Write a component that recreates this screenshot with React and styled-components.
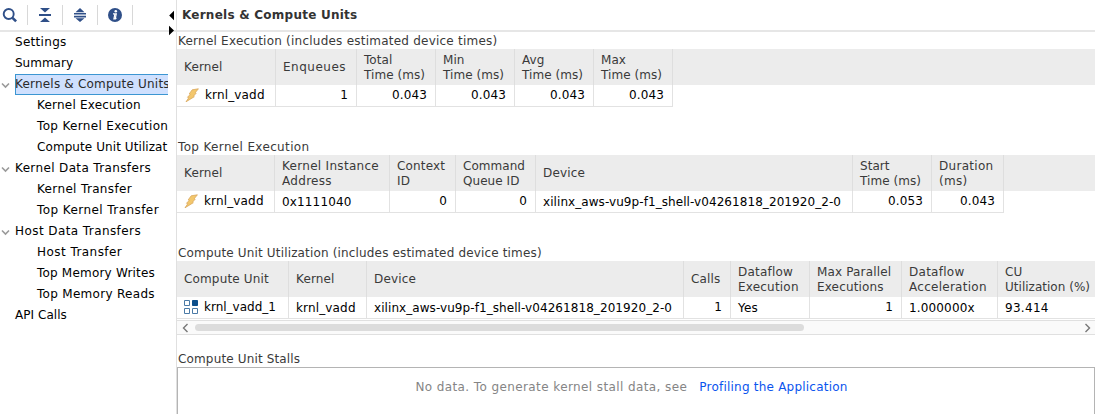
import React from "react";
import styled, { createGlobalStyle } from "styled-components";

const Global = createGlobalStyle`
  * { box-sizing: border-box; }
  body {
    margin: 0;
    background: #fff;
    overflow: hidden;
    font: 12px/15px "DejaVu Sans", sans-serif;
    color: #000;
  }
`;

const Window = styled.div`
  display: grid;
  grid-template-columns: 176px 1fr;
  height: 414px;
  overflow: hidden;
`;

const Sidebar = styled.aside`
  position: relative;
  display: flex;
  flex-direction: column;
  min-width: 0;
`;

const Toolbar = styled.div`
  display: flex;
  height: 32px;
  border-bottom: 2px solid #e6e6e6;
`;

const Tool = styled.div`
  display: flex;
  align-items: center;
  justify-content: center;
  width: ${(p) => p.$w}px;
  height: 20px;
  margin-top: 5px;
  padding-right: ${(p) => p.$pad || 0}px;
  border-right: 1px solid #d8d8d8;
`;

const SashArrows = styled.svg`
  position: absolute;
  left: 168px;
  top: 10px;
`;

const Tree = styled.div`
  width: 168px;
  overflow: hidden;
`;

const TreeRow = styled.div`
  display: grid;
  grid-template-columns: 15px max-content;
  align-items: stretch;
  height: 21px;
`;

const Twisty = styled.svg`
  margin: 8px 0 0 1px;
`;

const TreeLabel = styled.span`
  min-width: 160px;
  padding-left: ${(p) => (p.$child ? 22 : 0)}px;
  line-height: 21px;
  white-space: nowrap;
  letter-spacing: ${(p) => p.$ls}px;
  ${(p) =>
    p.$selected &&
    `background: #cfe0fe; color: #2a2a2a; box-shadow: inset 0 0 0 1px #3c96d2;`}
`;

const Main = styled.main`
  display: flex;
  flex-direction: column;
  min-width: 0;
  border-left: 1px solid #e0e0e0;
  color: #3a3a3a;
`;

const Title = styled.h1`
  margin: 0;
  height: 32px;
  padding-left: 5px;
  border-bottom: 2px solid #e6e6e6;
  font-size: 12px;
  line-height: 31px;
  color: #333;
  letter-spacing: 0.24px;
`;

const Section = styled.section`
  height: ${(p) => p.$h}px;
`;

const Caption = styled.h2`
  margin: 0;
  height: ${(p) => p.$h}px;
  padding: ${(p) => p.$h - 15}px 0 0 1px;
  font-size: 12px;
  font-weight: normal;
  line-height: 15px;
  white-space: nowrap;
  letter-spacing: ${(p) => p.$ls ?? 0.15}px;
`;

const HeadRow = styled.div`
  display: grid;
  grid-template-columns: ${(p) => p.$cols};
  height: 36px;
  background: #ececec;
`;

const HeadCell = styled.div`
  display: flex;
  align-items: center;
  padding: 1px 0 0 7px;
  border-right: 1px solid #dedede;
  white-space: pre;
  letter-spacing: ${(p) => p.$ls ?? 0.15}px;
`;

const BodyRow = styled.div`
  display: grid;
  grid-template-columns: ${(p) => p.$cols};
  width: max-content;
  height: 22px;
  border-bottom: 1px solid #e2e2e2;
  color: #000;
`;

const BodyCell = styled.div`
  display: flex;
  justify-content: ${(p) => (p.$right ? "flex-end" : "flex-start")};
  padding: ${(p) => (p.$raised ? 3 : 4)}px 8px 0 7px;
  border-right: 1px solid #e2e2e2;
  white-space: nowrap;
  letter-spacing: ${(p) => p.$ls ?? 0.15}px;
`;

const CellIcon = styled.span`
  display: flex;
  width: ${(p) => p.$w}px;
  flex: none;
  padding-left: ${(p) => p.$x || 0}px;
`;

const Scrollbar = styled.div`
  display: flex;
  align-items: center;
  justify-content: space-between;
  height: 15px;
  margin-top: 1px;
  padding: 0 4px 0 5px;
  background: #fafafa;
  border-top: 1px solid #e0e0e0;
  border-bottom: 1px solid #e0e0e0;
`;

const Thumb = styled.div`
  width: 609px;
  height: 7px;
  margin: 0 auto 0 6px;
  border-radius: 3.5px;
  background: #dcdcdc;
`;

const Empty = styled.div`
  display: flex;
  justify-content: center;
  height: 60px;
  padding: 12px 9px 0 0;
  border: 1px solid #b4b4b4;
  color: #858585;
  letter-spacing: 0.4px;
`;

const Link = styled.a`
  margin-left: 12px;
  color: #0a54ee;
  letter-spacing: 0.22px;
`;

const Chevron = () => (
  <Twisty width="9" height="7" viewBox="0 0 9 7" fill="none">
    <path d="M1 1.5l3.5 3.5L8 1.5" stroke="#9a9a9a" strokeWidth="1.6" />
  </Twisty>
);

const Bolt = () => (
  <svg width="14" height="15" viewBox="0 0 14 15">
    <path
      d="M7.2 1.8L13.4.8 10.3 4.6l.9.5-2.6 3 .7.6L1 13.8l2.8-4.1-1.3-.4 2.7-2.9-1-.5z"
      fill="#f3c76c"
      stroke="#d9a75c"
      strokeWidth=".8"
    />
  </svg>
);

const Blocks = () => (
  <svg width="14" height="14" viewBox="0 0 14 14" fill="none" stroke="#4a7aa6">
    <path d="M.5.5h5v5h-5zM.5 8.5h5v5h-5zM8.5 8.5h5v5h-5z" />
    <path d="M8.5.5h5v5h-5z" fill="#0d4f8b" stroke="#0d4f8b" />
  </svg>
);

const BLUE = "#2f4f88";

const SearchIcon = () => (
  <svg width="16" height="16" viewBox="0 0 16 16" fill="none" stroke={BLUE}>
    <circle cx="6.7" cy="7" r="5" strokeWidth="1.9" />
    <path d="M10.5 10.8l3.6 3.6" strokeWidth="2.6" />
  </svg>
);

const CollapseIcon = () => (
  <svg width="14" height="16" viewBox="0 0 14 16" fill={BLUE}>
    <path d="M2 1h10L7 5.5zM1 7h12v2H1zM2 15h10L7 10.5z" />
  </svg>
);

const ExpandIcon = () => (
  <svg width="14" height="16" viewBox="0 0 14 16" fill={BLUE}>
    <path d="M2.5 5.2L7 1l4.5 4.2zM1 6h12v1.6H1zM1 8.8h12v1.6H1zM2.5 11.2L7 15l4.5-3.8z" />
  </svg>
);

const InfoIcon = () => (
  <svg width="16" height="16" viewBox="0 0 16 16">
    <circle cx="8" cy="8" r="7" fill={BLUE} />
    <circle cx="8.8" cy="4.2" r="1.3" fill="#fff" />
    <path d="M6 6.8h3.3l-1 4.6h1.2M7.9 7l-1 4.8h2" stroke="#fff" strokeWidth="1.2" fill="none" />
  </svg>
);

const TREE = [
  { label: "Settings", ls: 0.3 },
  { label: "Summary", ls: 0 },
  { label: "Kernels & Compute Units", open: true, selected: true, ls: 0.2 },
  { label: "Kernel Execution", child: true, ls: 0.21 },
  { label: "Top Kernel Execution", child: true, ls: 0.34 },
  { label: "Compute Unit Utilizat", child: true, ls: 0.08 },
  { label: "Kernel Data Transfers", open: true, ls: 0.36 },
  { label: "Kernel Transfer", child: true, ls: 0.35 },
  { label: "Top Kernel Transfer", child: true, ls: 0.43 },
  { label: "Host Data Transfers", open: true, ls: 0.42 },
  { label: "Host Transfer", child: true, ls: 0.45 },
  { label: "Top Memory Writes", child: true, ls: 0.2 },
  { label: "Top Memory Reads", child: true, ls: 0.3 },
  { label: "API Calls", ls: 0.05 },
];

const DEVICE = "xilinx_aws-vu9p-f1_shell-v04261818_201920_2-0";

const EXECUTION = [
  { w: 99, head: "Kernel", value: "krnl_vadd", icon: "bolt", iconWidth: 21, iconX: 1 },
  { w: 81, head: "Enqueues", headLs: 0.5, value: "1", right: true },
  { w: 79, head: "Total\nTime (ms)", headLs: 0.05, value: "0.043", right: true },
  { w: 79, head: "Min\nTime (ms)", headLs: 0.05, value: "0.043", right: true },
  { w: 79, head: "Avg\nTime (ms)", headLs: 0.05, value: "0.043", right: true },
  { w: 79, head: "Max\nTime (ms)", headLs: 0.05, value: "0.043", right: true },
];

const TOP_EXECUTION = [
  { w: 98, head: "Kernel", value: "krnl_vadd", icon: "bolt", iconWidth: 20 },
  { w: 115, head: "Kernel Instance\nAddress", headLs: 0.3, value: "0x1111040" },
  { w: 66, head: "Context\nID", value: "0", right: true },
  { w: 80, head: "Command\nQueue ID", headLs: 0.05, value: "0", right: true },
  { w: 317, head: "Device", value: DEVICE, ls: 0.07 },
  { w: 79, head: "Start\nTime (ms)", headLs: 0.05, value: "0.053", right: true },
  { w: 72, head: "Duration\n(ms)", headLs: 0.3, value: "0.043", right: true },
];

const UTILIZATION = [
  { w: 112, head: "Compute Unit", value: "krnl_vadd_1", icon: "blocks", iconWidth: 20, ls: 0 },
  { w: 78, head: "Kernel", value: "krnl_vadd" },
  { w: 317, head: "Device", value: DEVICE, ls: 0.07 },
  { w: 47, head: "Calls", value: "1", right: true },
  { w: 79, head: "Dataflow\nExecution", headLs: 0.2, value: "Yes" },
  { w: 92, head: "Max Parallel\nExecutions", value: "1", right: true },
  { w: 96, head: "Dataflow\nAcceleration", headLs: 0.27, value: "1.000000x" },
  { w: 98, head: "CU\nUtilization (%)", headLs: 0.02, value: "93.414", ls: 0.3 },
];

const Table = ({ columns }) => {
  const cols = columns.map((c) => `${c.w}px`).join(" ");
  return (
    <>
      <HeadRow $cols={cols}>
        {columns.map((c, i) => (
          <HeadCell key={i} $ls={c.headLs}>{c.head}</HeadCell>
        ))}
      </HeadRow>
      <BodyRow $cols={cols}>
        {columns.map((c, i) => (
          <BodyCell key={i} $right={c.right} $raised={c.right || c.icon} $ls={c.ls}>
            {c.icon && (
              <CellIcon $w={c.iconWidth} $x={c.iconX}>
                {c.icon === "bolt" ? <Bolt /> : <Blocks />}
              </CellIcon>
            )}
            {c.value}
          </BodyCell>
        ))}
      </BodyRow>
    </>
  );
};

export default function App() {
  return (
    <Window>
      <Global />
      <Sidebar>
        <Toolbar>
          <Tool $w={28} $pad={7}><SearchIcon /></Tool>
          <Tool $w={35}><CollapseIcon /></Tool>
          <Tool $w={35}><ExpandIcon /></Tool>
          <Tool $w={35}><InfoIcon /></Tool>
        </Toolbar>
        <SashArrows width="8" height="26" viewBox="0 0 8 26">
          <path d="M6 .8v9.4L1.2 5.5zM1 15.8v9.4l5-4.7z" />
        </SashArrows>
        <Tree>
          {TREE.map((item) => (
            <TreeRow key={item.label}>
              <span>{item.open && <Chevron />}</span>
              <TreeLabel $child={item.child} $selected={item.selected} $ls={item.ls}>
                {item.label}
              </TreeLabel>
            </TreeRow>
          ))}
        </Tree>
      </Sidebar>
      <Main>
        <Title>Kernels &amp; Compute Units</Title>
        <Section $h={75}>
          <Caption $h={17} $ls={0.23}>Kernel Execution (includes estimated device times)</Caption>
          <Table columns={EXECUTION} />
        </Section>
        <Section $h={106}>
          <Caption $h={48} $ls={0.35}>Top Kernel Execution</Caption>
          <Table columns={TOP_EXECUTION} />
        </Section>
        <Section $h={122}>
          <Caption $h={48} $ls={0.16}>Compute Unit Utilization (includes estimated device times)</Caption>
          <Table columns={UTILIZATION} />
          <Scrollbar>
            <svg width="7" height="10" viewBox="0 0 7 10" fill="none" stroke="#777" strokeWidth="1.4">
              <path d="M5.5 1L1.5 5l4 4" />
            </svg>
            <Thumb />
            <svg width="7" height="10" viewBox="0 0 7 10" fill="none" stroke="#777" strokeWidth="1.4">
              <path d="M1.5 1l4 4-4 4" />
            </svg>
          </Scrollbar>
        </Section>
        <Caption $h={32}>Compute Unit Stalls</Caption>
        <Empty>
          No data. To generate kernel stall data, see
          <Link>Profiling the Application</Link>
        </Empty>
      </Main>
    </Window>
  );
}
